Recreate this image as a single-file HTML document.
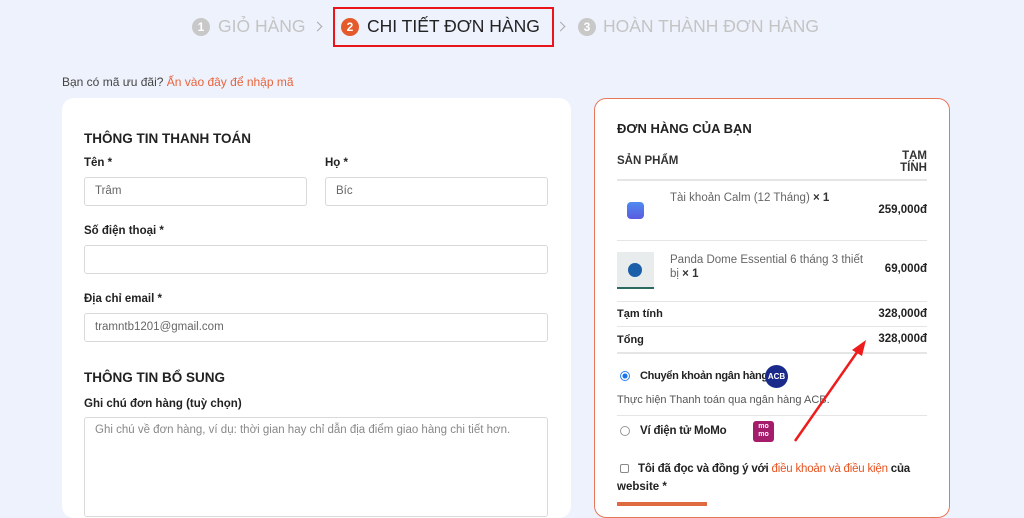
<!DOCTYPE html>
<html><head><meta charset="utf-8"><style>
*{box-sizing:border-box;margin:0;padding:0}
body{width:1024px;height:504px;overflow:hidden;background:#eef2fc;font-family:"Liberation Sans",sans-serif;position:relative;color:#222}
.a{position:absolute;white-space:nowrap}
.num{position:absolute;width:18px;height:18px;border-radius:50%;color:#fff;font-size:12px;font-weight:bold;text-align:center;line-height:18px}
.step{font-size:17.5px;color:#c4c4c4}
.card{background:#fff;border-radius:12px}
.lbl{font-size:11.5px;font-weight:bold;color:#222}
.inp{border:1px solid #d9d9d9;border-radius:3px;height:29px;font-size:11.5px;color:#666;padding-left:10px;line-height:27px}
.h{font-size:13.5px;font-weight:bold;color:#222}
.line{height:1px;background:#e5e5e5}
.r{text-align:right;font-weight:bold;font-size:11.5px}
.chev{position:absolute;width:7px;height:7px;border-right:1.5px solid #aaa;border-top:1.5px solid #aaa;transform:rotate(45deg)}
</style></head><body>
<div class="num" style="left:192px;top:18px;background:#c8c8c8">1</div>
<div class="a step" style="left:218px;top:16px">GIỎ HÀNG</div>
<div class="chev" style="left:314px;top:23px"></div>
<div class="a" style="left:333px;top:7px;width:221px;height:40px;border:2px solid #e8151b"></div>
<div class="num" style="left:341px;top:18px;background:#e55a2b">2</div>
<div class="a step" style="left:367px;top:16px;color:#222">CHI TIẾT ĐƠN HÀNG</div>
<div class="chev" style="left:557px;top:23px"></div>
<div class="num" style="left:578px;top:18px;background:#c8c8c8">3</div>
<div class="a step" style="left:603px;top:16px">HOÀN THÀNH ĐƠN HÀNG</div>

<div class="a" style="left:62px;top:75px;font-size:12px;color:#444">Bạn có mã ưu đãi? <span style="color:#e8643c">Ấn vào đây để nhập mã</span></div>

<div class="a card" style="left:62px;top:98px;width:509px;height:420px"></div>
<div class="a h" style="left:84px;top:131px">THÔNG TIN THANH TOÁN</div>
<div class="a lbl" style="left:84px;top:157px">Tên *</div>
<div class="a lbl" style="left:325px;top:157px">Họ *</div>
<div class="a inp" style="left:84px;top:177px;width:223px">Trâm</div>
<div class="a inp" style="left:325px;top:177px;width:223px">Bíc</div>
<div class="a lbl" style="left:84px;top:225px">Số điện thoại *</div>
<div class="a inp" style="left:84px;top:245px;width:464px"></div>
<div class="a lbl" style="left:84px;top:293px">Địa chỉ email *</div>
<div class="a inp" style="left:84px;top:313px;width:464px">tramntb1201@gmail.com</div>
<div class="a h" style="left:84px;top:370px">THÔNG TIN BỔ SUNG</div>
<div class="a lbl" style="left:84px;top:398px">Ghi chú đơn hàng (tuỳ chọn)</div>
<div class="a inp" style="left:84px;top:417px;width:464px;height:100px;padding-top:4px;line-height:16px;color:#888">Ghi chú về đơn hàng, ví dụ: thời gian hay chỉ dẫn địa điểm giao hàng chi tiết hơn.</div>

<div class="a card" style="left:594px;top:98px;width:356px;height:420px;border:1px solid #e8775a"></div>
<div class="a h" style="left:617px;top:121px;font-size:13px">ĐƠN HÀNG CỦA BẠN</div>
<div class="a" style="left:617px;top:155px;font-size:11.5px;font-weight:bold;color:#333">SẢN PHẨM</div>
<div class="a r" style="left:860px;top:150px;width:67px;line-height:12px;color:#333">TẠM<br>TÍNH</div>
<div class="a line" style="left:617px;top:179px;width:310px;height:2px"></div>
<div class="a" style="left:627px;top:202px;width:17px;height:17px;border-radius:4px;background:linear-gradient(#4f8bf0,#5a5be0)"></div>
<div class="a" style="left:670px;top:192px;font-size:11.5px;color:#666">Tài khoản Calm (12 Tháng) <b style="color:#333">× 1</b></div>
<div class="a r" style="left:840px;top:204px;width:87px">259,000đ</div>
<div class="a line" style="left:617px;top:240px;width:310px"></div>
<div class="a" style="left:617px;top:252px;width:37px;height:37px;background:#e8ecec;border-bottom:2px solid #2a6a60"><div style="margin:11px 0 0 11px;width:14px;height:14px;border-radius:50%;background:#1a5fa8"></div></div>
<div class="a" style="left:670px;top:253px;font-size:11.5px;color:#666;line-height:14px">Panda Dome Essential 6 tháng 3 thiết<br>bị <b style="color:#333">× 1</b></div>
<div class="a r" style="left:840px;top:263px;width:87px">69,000đ</div>
<div class="a line" style="left:617px;top:301px;width:310px"></div>
<div class="a" style="left:617px;top:308px;font-size:11px;font-weight:bold">Tạm tính</div>
<div class="a r" style="left:840px;top:308px;width:87px">328,000đ</div>
<div class="a line" style="left:617px;top:326px;width:310px"></div>
<div class="a" style="left:617px;top:334px;font-size:11px;font-weight:bold">Tổng</div>
<div class="a r" style="left:840px;top:333px;width:87px">328,000đ</div>
<div class="a line" style="left:617px;top:352px;width:310px;height:2px"></div>
<div class="a" style="left:620px;top:371px;width:10px;height:10px;border-radius:50%;border:1px solid #2f80ed;background:radial-gradient(#1a73e8 40%,#fff 50%)"></div>
<div class="a" style="left:640px;top:370px;font-size:11px;font-weight:bold;letter-spacing:-0.3px">Chuyển khoản ngân hàng</div>
<div class="a" style="left:765px;top:365px;width:23px;height:23px;border-radius:50%;background:#1a2a8a;color:#fff;font-size:8px;font-weight:bold;text-align:center;line-height:23px">ACB</div>
<div class="a" style="left:617px;top:394px;font-size:11px;color:#555">Thực hiện Thanh toán qua ngân hàng ACB.</div>
<div class="a line" style="left:617px;top:415px;width:310px"></div>
<div class="a" style="left:620px;top:426px;width:10px;height:10px;border-radius:50%;border:1px solid #999"></div>
<div class="a" style="left:640px;top:425px;font-size:11.5px;font-weight:bold;letter-spacing:-0.2px">Ví điện tử MoMo</div>
<div class="a" style="left:753px;top:421px;width:21px;height:21px;border-radius:3px;background:#a51c6b;color:#fff;font-size:7px;font-weight:bold;line-height:8px;text-align:center;padding-top:2px">mo<br>mo</div>
<div class="a" style="left:620px;top:464px;width:9px;height:9px;border:1px solid #888;border-radius:2px"></div>
<div class="a" style="left:638px;top:463px;font-size:11.5px;font-weight:bold;letter-spacing:-0.2px">Tôi đã đọc và đồng ý với <span style="color:#e8531f;font-weight:normal">điều khoản và điều kiện</span> của</div>
<div class="a" style="left:617px;top:481px;font-size:11.5px;font-weight:bold">website *</div>
<div class="a" style="left:617px;top:502px;width:90px;height:4px;background:#e06a40"></div>

<svg class="a" style="left:790px;top:338px" width="90" height="110"><line x1="5" y1="103" x2="70" y2="10" stroke="#ee1c1c" stroke-width="2.5"/><polygon points="76,2 62,12 72,18" fill="#ee1c1c"/></svg>
</body></html>
